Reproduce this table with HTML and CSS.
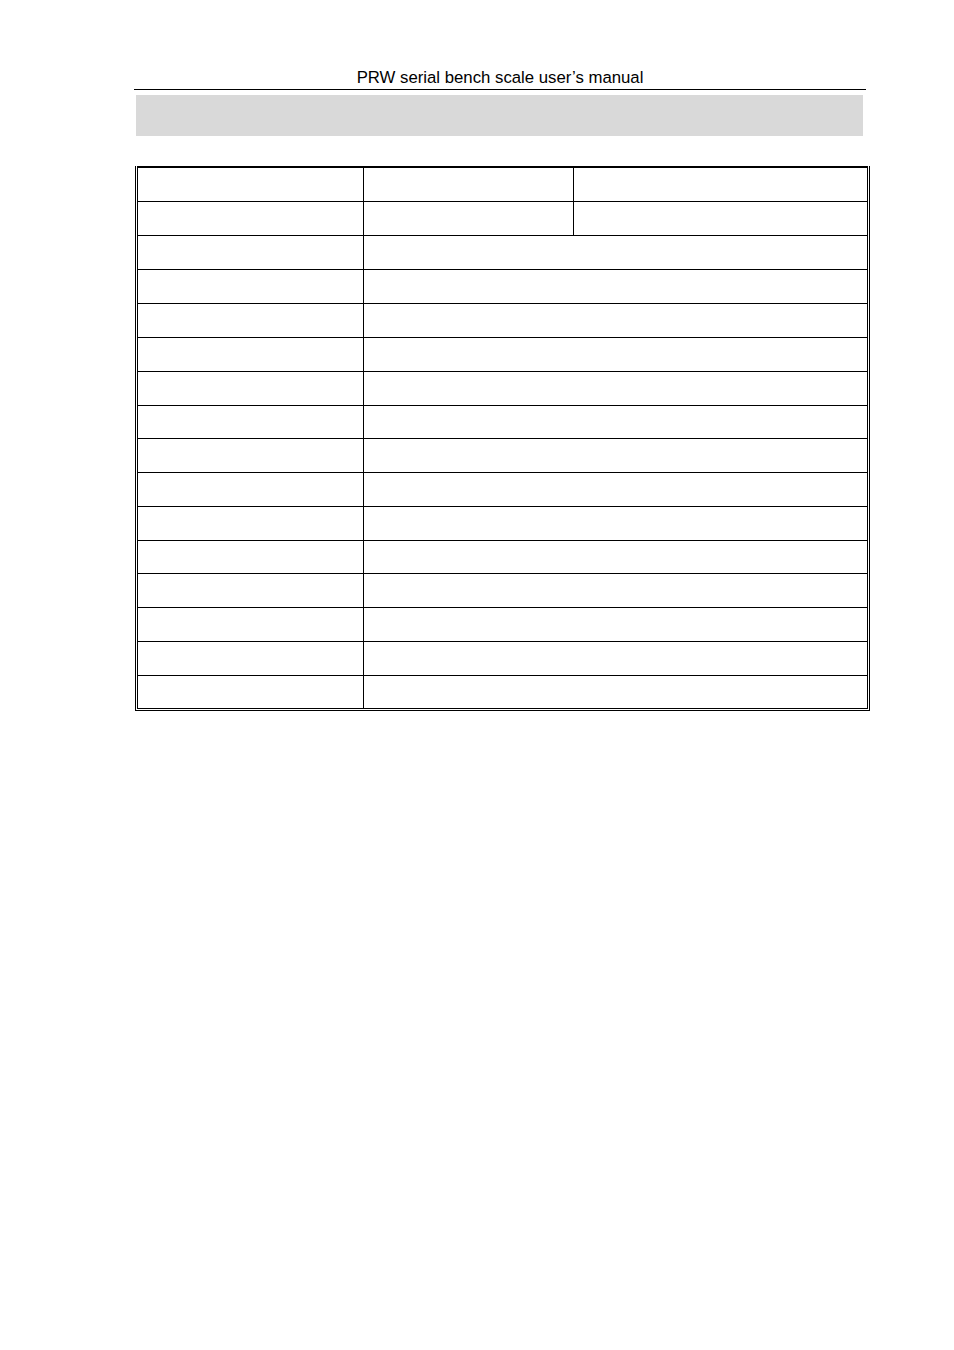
FILE: index.html
```html
<!DOCTYPE html>
<html lang="en">
<head>
<meta charset="utf-8">
<title>PRW serial bench scale user’s manual</title>
<link rel="stylesheet" href="styles.css">
</head>
<body>
<div class="page">
  <div class="header">PRW serial bench scale user’s manual</div>
  <div class="band"></div>
  <div class="frame">
    <table class="spec">
      <colgroup>
        <col class="c1"><col class="c2"><col class="c3">
      </colgroup>
      <tr class="r34"><td></td><td></td><td></td></tr>
      <tr class="r34"><td></td><td></td><td></td></tr>
      <tr class="r34"><td></td><td colspan="2"></td></tr>
      <tr class="r34"><td></td><td colspan="2"></td></tr>
      <tr class="r34"><td></td><td colspan="2"></td></tr>
      <tr class="r34"><td></td><td colspan="2"></td></tr>
      <tr class="r34"><td></td><td colspan="2"></td></tr>
      <tr class="r33"><td></td><td colspan="2"></td></tr>
      <tr class="r34"><td></td><td colspan="2"></td></tr>
      <tr class="r34"><td></td><td colspan="2"></td></tr>
      <tr class="r34"><td></td><td colspan="2"></td></tr>
      <tr class="r33"><td></td><td colspan="2"></td></tr>
      <tr class="r34"><td></td><td colspan="2"></td></tr>
      <tr class="r34"><td></td><td colspan="2"></td></tr>
      <tr class="r34"><td></td><td colspan="2"></td></tr>
      <tr class="r33"><td></td><td colspan="2"></td></tr>
    </table>
  </div>
</div>
</body>
</html>
```
FILE: styles.css
```css
* { box-sizing: border-box; }
html, body { margin: 0; padding: 0; background: #fff; }
body { font-family: "Liberation Sans", Arial, sans-serif; color: #000; }

.page {
  margin-left: 134px;
  width: 732px;
}

.header {
  padding-top: 68px;
  padding-bottom: 1px;
  line-height: 20px;
  font-size: 16.75px;
  text-align: center;
  border-bottom: 1px solid #000;
}

.band {
  margin-top: 5px;
  margin-left: 2px;
  width: 727px;
  height: 41px;
  background: #d9d9d9;
}

.frame {
  margin-top: 30px;
  margin-left: 1px;
  width: 735px;
  border-left: 1px solid #000;
  border-right: 1px solid #000;
  border-bottom: 1px solid #000;
  padding: 0 1px 1px 1px;
}

.spec {
  width: 731px;
  table-layout: fixed;
  border-collapse: separate;
  border-spacing: 0;
  border-top: 2px solid #000;
  border-left: 1px solid #000;
}

.c1 { width: 226px; }
.c2 { width: 210px; }
.c3 { width: 294px; }

.spec td {
  padding: 0;
  border-right: 1px solid #000;
  border-bottom: 1px solid #000;
}

.r34 td { height: 34px; }
.r33 td { height: 33px; }
```
